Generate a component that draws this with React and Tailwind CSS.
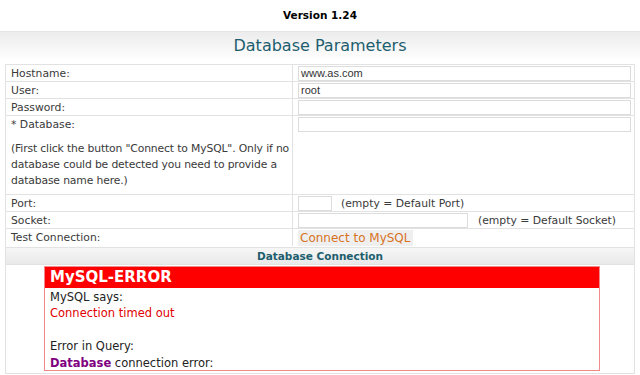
import React from "react";

const Row = ({ label, children, tall }) => (
    <div className="grid grid-cols-[287px_1fr] border-b border-[#e2e2e2]">
        <div className={`border-r border-[#e2e2e2] pl-[5px] ${tall ? "h-[78px]" : "h-[16px] leading-[17px]"}`}>
            {label}
        </div>
        <div className="pl-[5px] pr-[3px] pt-[1px]">{children}</div>
    </div>
);

const Field = ({ value = "", w = "w-full" }) => (
    <div className={`${w} h-[15px] border border-[#dcdcdc] bg-white px-[2px] text-[11px] leading-[13px] text-[#333] font-['Liberation_Sans',sans-serif]`}>
        {value}
    </div>
);

export default function App() {
    return (
        <div className="w-[640px] h-[375px] bg-white overflow-hidden font-['DejaVu_Sans',sans-serif] text-[#3a3a3a]">
            <div className="h-[31px] pt-[1px] flex items-center justify-center text-[10.5px] font-bold text-black">
                Version 1.24
            </div>

            <div className="h-[30px] border-t border-[#e4e4e4] bg-gradient-to-b from-[#ececec] to-white flex items-center justify-center">
                <h1 className="text-[16px] text-[#1d5e6e] mt-[-2px]">Database Parameters</h1>
            </div>

            <div className="mx-[5px] mt-[3px] border border-[#e2e2e2] text-[10.8px]">
                <Row label="Hostname:"><Field value="www.as.com" /></Row>
                <Row label="User:"><Field value="root" /></Row>
                <Row label="Password:"><Field /></Row>
                <Row
                    tall
                    label={
                        <div>
                            <div className="leading-[18px]">* Database:</div>
                            <p className="mt-[7px] leading-[16px] tracking-[-0.15px]">
                                (First click the button "Connect to MySQL". Only if no database could be detected you need to provide a database name here.)
                            </p>
                        </div>
                    }
                >
                    <Field />
                </Row>
                <Row label="Port:">
                    <div className="flex items-center gap-[9px]">
                        <Field w="w-[34px]" />
                        <span className="leading-[15px]">(empty = Default Port)</span>
                    </div>
                </Row>
                <Row label="Socket:">
                    <div className="flex items-center gap-[10px]">
                        <Field w="w-[170px]" />
                        <span className="leading-[15px]">(empty = Default Socket)</span>
                    </div>
                </Row>
                <div className="grid grid-cols-[287px_1fr] border-b border-[#e2e2e2]">
                    <div className="border-r border-[#e2e2e2] pl-[5px] h-[17px] leading-[17px]">Test Connection:</div>
                    <div className="pl-[5px] pt-[1px]">
                        <button className="h-[16px] px-[2px] bg-[#efefef] text-[#d7731f] text-[12px] leading-[16px]">
                            Connect to MySQL
                        </button>
                    </div>
                </div>
                <div className="h-[17px] bg-gradient-to-b from-[#f6f6f6] to-[#e9e9e9] border-b border-[#e2e2e2] text-center font-bold text-[#1d5e6e] leading-[17px] text-[10.5px]">
                    Database Connection
                </div>
                <div className="pt-[1px] pb-[2px] pl-[38px] pr-[34px]">
                    <div className="border border-[#f08a8a] h-[105px]">
                        <div className="h-[21px] bg-[#ff0000] text-white font-bold text-[15px] leading-[21px] pl-[5px]">
                            MySQL-ERROR
                        </div>
                        <div className="pl-[5px] text-[#222] text-[11.5px] leading-[16.5px] pt-[0.5px]">
                            <div>MySQL says:</div>
                            <div className="text-[#e00000]">Connection timed out</div>
                            <div>&nbsp;</div>
                            <div>Error in Query:</div>
                            <div><span className="font-bold text-[#800080]">Database</span> connection error:</div>
                        </div>
                    </div>
                </div>
            </div>
        </div>
    );
}
